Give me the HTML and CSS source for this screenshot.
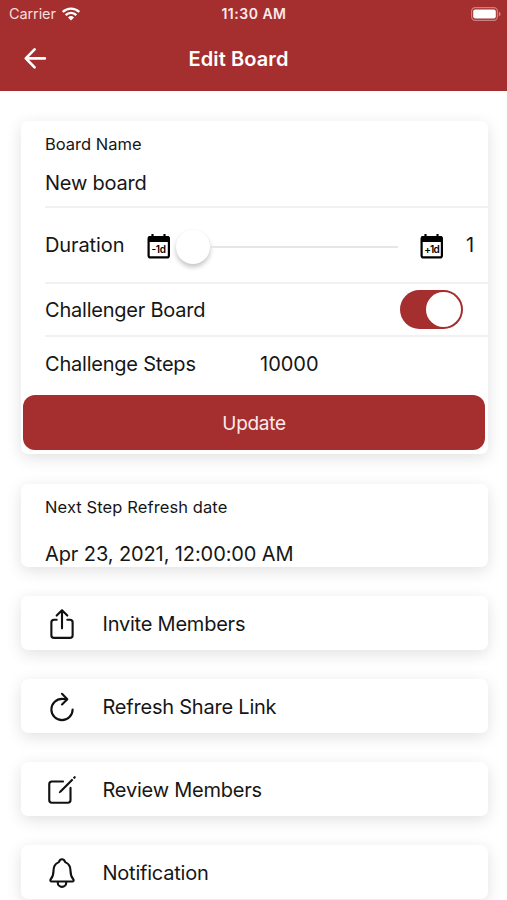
FILE: index.html
```html
<!DOCTYPE html>
<html lang="en">
<head>
  <meta charset="UTF-8">
  <meta name="viewport" content="width=device-width, initial-scale=1.0">
  <title>Edit Board</title>
  <link rel="stylesheet" href="styles.css">
</head>
<body>

  <header class="header">
    <div class="status-bar">
      <div class="carrier">
        <span class="carrier-name">Carrier</span>
        <svg class="wifi" viewBox="0 0 18 14">
          <path d="M.8 5a11.6 11.6 0 0 1 16.4 0M3.7 8.1a7.5 7.5 0 0 1 10.6 0" fill="none" stroke="#fff" stroke-width="2.4"/>
          <path d="M9 13.6L6 10.5a4.3 4.3 0 0 1 6 0z" fill="#fff"/>
        </svg>
      </div>
      <span class="clock">11:30 AM</span>
      <div class="battery-wrap">
        <svg class="battery" viewBox="0 0 30 14">
          <rect x=".6" y=".6" width="25.8" height="12.8" rx="3.6" fill="none" stroke="#fff" stroke-opacity=".4" stroke-width="1.2"/>
          <rect x="2.2" y="2.4" width="22.6" height="9.2" rx="2" fill="#fff"/>
          <path d="M27.8 4.6c2.4.9 2.4 3.9 0 4.8z" fill="#fff" fill-opacity=".4"/>
        </svg>
      </div>
    </div>
    <div class="toolbar">
      <svg class="back" viewBox="0 0 24 24">
        <path d="M11.6 2.4L2.8 11.4l8.8 9M3.200 11.400H21.800" fill="none" stroke="#fff" stroke-width="2.7" stroke-linecap="round" stroke-linejoin="round"/>
      </svg>
      <h1 class="title">Edit Board</h1>
    </div>
  </header>

  <main class="content">
    <section class="card form-card">
      <div class="item item-name">
        <div class="label-small name-label">Board Name</div>
        <div class="value name-value">New board</div>
      </div>
      <div class="item item-duration">
        <span class="value duration-label">Duration</span>
        <svg class="calendar" viewBox="0 0 24 26">
          <path d="M5.5 1v4M17.5 1v4" stroke="#000" stroke-width="2.2"/>
          <rect x="1.6" y="4" width="20.3" height="20.4" rx="2" fill="#fff" stroke="#000" stroke-width="2.2"/>
          <path d="M1 4.5Q1 3 2.5 3h18.500Q22.500 3 22.500 4.500V9H1z" fill="#000"/>
          <text class="calendar-text" x="11.6" y="20.4" text-anchor="middle">-1d</text>
        </svg>
        <div class="range">
          <div class="range-knob"></div>
          <div class="range-bar"></div>
        </div>
        <svg class="calendar" viewBox="0 0 24 26">
          <path d="M5.5 1v4M17.5 1v4" stroke="#000" stroke-width="2.2"/>
          <rect x="1.6" y="4" width="20.3" height="20.4" rx="2" fill="#fff" stroke="#000" stroke-width="2.2"/>
          <path d="M1 4.5Q1 3 2.5 3h18.500Q22.500 3 22.500 4.500V9H1z" fill="#000"/>
          <text class="calendar-text calendar-plus" x="11.6" y="20.4" text-anchor="middle">+1d</text>
        </svg>
        <span class="value duration-value">1</span>
      </div>
      <div class="item item-challenger">
        <span class="value challenger-label">Challenger Board</span>
        <div class="toggle"><div class="toggle-knob"></div></div>
      </div>
      <div class="item item-steps">
        <span class="value steps-label">Challenge Steps</span>
        <span class="value steps-value">10000</span>
      </div>
      <button type="button" class="update"><span class="update-text">Update</span></button>
    </section>

    <section class="card date-card">
      <div class="label-small date-label">Next Step Refresh date</div>
      <div class="value date-value">Apr 23, 2021, 12:00:00 AM</div>
    </section>

    <section class="card action">
      <svg class="icon" viewBox="0 0 512 512">
        <path d="M336 192h40a40 40 0 0140 40v192a40 40 0 01-40 40H136a40 40 0 01-40-40V232a40 40 0 0140-40h40M336 128l-80-80-80 80M256 321V48"/>
      </svg>
      <span class="value action-invite">Invite Members</span>
    </section>

    <section class="card action">
      <svg class="icon" viewBox="0 0 512 512">
        <path d="M320 146s24.36-12-64-12a160 160 0 10160 160"/>
        <path d="M256 58l80 80-80 80"/>
      </svg>
      <span class="value action-refresh">Refresh Share Link</span>
    </section>

    <section class="card action">
      <svg class="icon" viewBox="0 0 512 512">
        <path d="M384 224v184a40 40 0 01-40 40H104a40 40 0 01-40-40V168a40 40 0 0140-40h167.48"/>
        <path class="icon-fill" d="M459.94 53.25a16.06 16.06 0 00-23.22-.56L424.35 65a8 8 0 000 11.31l11.34 11.32a8 8 0 0011.34 0l12.06-12c6.1-6.09 6.67-16.01.85-22.38zM399.34 90L218.82 270.2a9 9 0 00-2.31 3.93L208.16 299a3.91 3.91 0 004.86 4.86l24.85-8.35a9 9 0 003.93-2.31L422 112.66a9 9 0 000-12.66l-9.95-10a9 9 0 00-12.71 0z"/>
      </svg>
      <span class="value action-review">Review Members</span>
    </section>

    <section class="card action">
      <svg class="icon" viewBox="0 0 512 512">
        <path d="M427.68 351.43C402 320 383.87 304 383.87 217.35 383.87 138 343.35 109.73 310 96c-4.43-1.82-8.6-6-9.95-10.55C294.2 65.54 277.8 48 256 48s-38.21 17.55-44 37.47c-1.35 4.6-5.52 8.71-9.95 10.53-33.39 13.75-73.87 41.92-73.87 121.35C128.13 304 110 320 84.32 351.43 73.68 364.45 83 384 101.61 384h308.88c18.51 0 27.77-19.61 17.19-32.57zM320 384v16a64 64 0 01-128 0v-16"/>
      </svg>
      <span class="value action-notification">Notification</span>
    </section>
  </main>

</body>
</html>
```
FILE: styles.css
```css
* {
  box-sizing: border-box;
}

body {
  margin: 0;
  height: 900px;
  overflow: hidden;
  background: #fff;
  color: #161616;
  font-family: Inter, "Liberation Sans", sans-serif;
}

svg {
  display: block;
  flex: none;
}

.header {
  height: 91px;
  background: #a52e2e;
  color: #fff;
}

.status-bar {
  display: grid;
  grid-template-columns: 1fr auto 1fr;
  align-items: center;
  height: 27px;
  padding: 0 6px 0 9px;
}

.carrier {
  display: flex;
  align-items: center;
  gap: 6px;
  font-size: 14.5px;
  letter-spacing: -0.1px;
  color: #f7dfdf;
}

.wifi {
  width: 18px;
  height: 14px;
}

.clock {
  font-size: 14px;
  font-weight: 600;
  letter-spacing: 0.5px;
  color: #fbe9e9;
  margin-right: 2px;
}

.battery-wrap {
  display: flex;
  justify-content: flex-end;
}

.battery {
  width: 30px;
  height: 14px;
}

.toolbar {
  display: grid;
  grid-template-columns: 24px 1fr 54px;
  align-items: center;
  height: 64px;
  padding: 0 23px;
}

.back {
  width: 24px;
  height: 24px;
}

.title {
  margin: 0;
  font-size: 20px;
  font-weight: 600;
  text-align: center;
  letter-spacing: 0.1px;
}

.content {
  padding: 30px 19px 0 21px;
}

.card {
  border-radius: 7px;
  background: #fff;
  box-shadow: 0 4px 16px rgba(0, 0, 0, 0.12);
  margin-bottom: 30px;
  overflow: hidden;
}

.label-small {
  font-size: 16.5px;
  line-height: 22px;
}

.value {
  font-size: 20px;
  line-height: 26px;
  letter-spacing: -0.22px;
  white-space: nowrap;
}

.item {
  display: flex;
  align-items: center;
  margin-left: 24px;
  border-bottom: 2px solid #f1f1f1;
}

.form-card {
  height: 333px;
}

.item-name {
  flex-direction: column;
  align-items: flex-start;
  height: 87px;
  padding-top: 12px;
}

.name-value {
  margin-top: 15px;
}

.item-duration {
  height: 76px;
}

.duration-label {
  width: 102px;
  letter-spacing: -0.1px;
}

.calendar {
  width: 24px;
  height: 26px;
  margin-top: 2px;
}

.calendar-text {
  font-size: 10px;
  font-weight: 600;
  letter-spacing: -0.3px;
}

.calendar-plus {
  letter-spacing: -0.8px;
}

.range {
  display: flex;
  align-items: center;
  width: 222px;
  margin: 3px 22px 0 5px;
}

.range-knob {
  width: 34px;
  height: 34px;
  border-radius: 50%;
  background: #fff;
  box-shadow: 0 3px 5px rgba(0, 0, 0, 0.24);
}

.range-bar {
  flex: 1;
  height: 2px;
  background: #e6e6e6;
}

.duration-value {
  margin-left: 22px;
}

.item-challenger {
  justify-content: space-between;
  height: 53px;
  padding-right: 25px;
}

.toggle {
  display: flex;
  justify-content: flex-end;
  width: 63px;
  height: 39px;
  padding: 2px;
  border-radius: 20px;
  background: #a52e2e;
}

.toggle-knob {
  width: 35px;
  height: 35px;
  border-radius: 50%;
  background: #fff;
}

.item-steps {
  height: 58px;
  padding-bottom: 4px;
  border-bottom: none;
}

.steps-label {
  width: 215px;
}

.steps-value {
  letter-spacing: 0;
}

.update {
  display: block;
  width: 462px;
  height: 55px;
  margin-left: 2px;
  padding-top: 2px;
  border: none;
  border-radius: 12px;
  background: #a52e2e;
  color: #fbeaea;
  font-family: inherit;
  font-size: 19px;
  letter-spacing: -0.3px;
}

.date-card {
  height: 83px;
  padding: 12px 24px 0;
  margin-bottom: 29px;
}

.date-label {
  letter-spacing: 0.1px;
}

.date-value {
  margin-top: 23px;
  letter-spacing: -0.1px;
}

.action {
  display: flex;
  align-items: center;
  gap: 24px;
  height: 54px;
  padding: 1px 0 0 23.5px;
  margin-bottom: 29px;
}

.icon {
  width: 34px;
  height: 34px;
  fill: none;
  stroke: #111;
  stroke-width: 32;
  stroke-linecap: round;
  stroke-linejoin: round;
}

.icon-fill {
  fill: #111;
  stroke: none;
}
```
